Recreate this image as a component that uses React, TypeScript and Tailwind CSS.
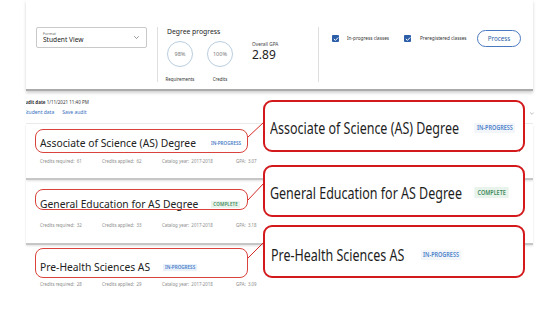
import React from "react";

function Chevron({ className }: { className?: string }) {
  return (
    <svg viewBox="0 0 10 6" className={className} fill="none">
      <path d="M1 1l4 4 4-4" stroke="currentColor" strokeWidth="1.2" strokeLinecap="round" strokeLinejoin="round" />
    </svg>
  );
}

function Check() {
  return (
    <span className="w-[7px] h-[7px] rounded-[1px] bg-[#2c5fa8] flex items-center justify-center">
      <svg viewBox="0 0 8 8" className="w-[6px] h-[6px]" fill="none">
        <path d="M1.5 4.2l1.7 1.7L6.6 2.3" stroke="white" strokeWidth="1.3" strokeLinecap="round" strokeLinejoin="round" />
      </svg>
    </span>
  );
}

function SmallBadge({ kind }: { kind: "ip" | "c" | "ip2" }) {
  if (kind === "c")
    return (
      <span className="ml-[13px] px-[2px] leading-[7px] text-[4.6px] font-semibold tracking-[0.1px] text-[#3f8a5c] bg-[#e9f4ec]">
        COMPLETE
      </span>
    );
  return (
    <span
      className={
        kind === "ip2"
          ? "ml-[13px] px-[2px] leading-[7px] text-[4.6px] font-semibold text-[#4a7ec8] bg-[#e9f1fb]"
          : "ml-[14px] px-[1px] leading-[7px] text-[4.6px] font-semibold text-[#4a7ec8]"
      }
    >
      IN-PROGRESS
    </span>
  );
}

function Meta({ req, app, gpa }: { req: string; app: string; gpa: string }) {
  return (
    <div className="flex leading-[6px] text-[4.4px] text-[#8d8d8d] whitespace-nowrap">
      <span className="w-[62px]">Credits required:&nbsp; {req}</span>
      <span className="w-[60px]">Credits applied:&nbsp; {app}</span>
      <span className="w-[74px]">Catalog year:&nbsp; 2017-2018</span>
      <span>GPA:&nbsp; {gpa}</span>
    </div>
  );
}

export default function App() {
  return (
    <div className="relative w-[554px] h-[312px] bg-white overflow-hidden font-['Noto_Sans',sans-serif] text-[#222]">
      <div className="ml-[26px] w-[507px]">
        {/* top panel */}
        <div className="h-[91px] border-b-2 border-[#ababab] shadow-[0_2px_3px_rgba(0,0,0,0.18)] flex items-start pt-[27px] pl-[10px]">
          <div className="w-[111px] h-[21px] border border-[#c9c9c9] rounded-[2px] flex items-center justify-between pl-[6px] pr-[7px]">
            <div className="flex flex-col">
              <span className="text-[3.8px] leading-[5px] text-[#666]">Format</span>
              <span className="text-[6.6px] leading-[8px] text-[#222]">Student View</span>
            </div>
            <Chevron className="w-[5px] h-[3px] text-[#555]" />
          </div>
          <div className="ml-[10px] w-px h-[55px] bg-[#dedede]" />
          <div className="ml-[9px] flex flex-col">
            <span className="text-[6.8px] leading-[10px] text-[#222]">Degree progress</span>
            <div className="mt-[4px] flex gap-[14px]">
              <div className="flex flex-col items-center w-[26px]">
                <div className="w-[26px] h-[26px] rounded-full border border-[#b9cde0] flex items-center justify-center text-[5.6px] text-[#7a7a7a]">
                  98%
                </div>
                <span className="mt-[9px] text-[4.4px] leading-[6px] whitespace-nowrap text-[#333]">Requirements</span>
              </div>
              <div className="flex flex-col items-center w-[26px]">
                <div className="w-[26px] h-[26px] rounded-full border border-[#b9cde0] flex items-center justify-center text-[5.6px] text-[#7a7a7a]">
                  100%
                </div>
                <span className="mt-[9px] text-[4.4px] leading-[6px] text-[#333]">Credits</span>
              </div>
            </div>
          </div>
          <div className="ml-[19px] w-[66px] mt-[14px] flex flex-col">
            <span className="text-[4.8px] leading-[6px] text-[#444]">Overall GPA</span>
            <span className="text-[12px] leading-[15px] text-[#222]">2.89</span>
          </div>
          <div className="w-px h-[55px] bg-[#dedede]" />
          <div className="ml-[13px] mt-[3px] h-[17px] flex items-center">
            <Check />
            <span className="ml-[8px] w-[50px] text-[4.7px] whitespace-nowrap text-[#333]">In-progress classes</span>
            <span className="ml-[7px]">
              <Check />
            </span>
            <span className="ml-[9px] w-[54px] text-[4.7px] whitespace-nowrap text-[#333]">Preregistered classes</span>
            <span className="ml-[3px] w-[44px] h-[17px] rounded-full border border-[#4b79c0] flex items-center justify-center text-[6.3px] text-[#2d5ea8]">
              Process
            </span>
          </div>
        </div>

        {/* audit info */}
        <div className="h-[33px] border-b border-[#ececec] flex justify-between">
          <div className="overflow-hidden pt-[8px]">
            <div className="-ml-[4px] leading-[6px] text-[4.5px] text-[#333] whitespace-nowrap">
              <span className="font-bold">Audit date</span> 1/11/2021 11:40 PM
            </div>
            <div className="-ml-[2px] mt-[4px] leading-[6px] text-[5px] text-[#3a6fc0] whitespace-nowrap">
              Student data<span className="ml-[8px]">Save audit</span>
            </div>
          </div>
          <Chevron className="mt-[21px] -mr-[1px] w-[4px] h-[3px] text-[#777]" />
        </div>

        {/* card 1 */}
        <div className="relative h-[56px] border-b-2 border-[#c6c6c6] shadow-[0_1px_2px_rgba(0,0,0,0.12)] pl-[14px] pt-[12px]">
          <div className="flex items-center h-[14px]">
            <span className="text-[10.3px] leading-[14px]">Associate of Science (AS) Degree</span>
            <SmallBadge kind="ip" />
          </div>
          <div className="mt-[8px]">
            <Meta req="61" app="62" gpa="3.07" />
          </div>
          <Chevron className="absolute left-[491px] top-[25px] w-[5px] h-[3px] text-[#555]" />
        </div>

        {/* card 2 */}
        <div className="h-[65px] border-b-2 border-[#c6c6c6] shadow-[0_1px_2px_rgba(0,0,0,0.12)] pl-[14px] pt-[17px]">
          <div className="flex items-center h-[14px]">
            <span className="text-[10.3px] leading-[14px]">General Education for AS Degree</span>
            <SmallBadge kind="c" />
          </div>
          <div className="mt-[11px]">
            <Meta req="32" app="33" gpa="3.18" />
          </div>
        </div>

        {/* card 3 */}
        <div className="pl-[14px] pt-[15px]">
          <div className="flex items-center h-[14px]">
            <span className="text-[10.3px] leading-[14px]">Pre-Health Sciences AS</span>
            <SmallBadge kind="ip2" />
          </div>
          <div className="mt-[7px]">
            <Meta req="28" app="29" gpa="3.09" />
          </div>
        </div>
      </div>

      {/* annotation: small highlight boxes */}
      <div className="absolute left-[35px] top-[129px] w-[213px] h-[24px] border border-[#d9433c] rounded-[8px]" />
      <div className="absolute left-[35px] top-[189px] w-[213px] h-[21px] border border-[#d9433c] rounded-[8px]" />
      <div className="absolute left-[35px] top-[248px] w-[213px] h-[30px] border border-[#d9433c] rounded-[8px]" />

      {/* connectors */}
      <svg className="absolute left-0 top-0 w-[554px] h-[312px]" viewBox="0 0 554 312" fill="none">
        <line x1="248" y1="137" x2="264" y2="122" stroke="#d42a24" strokeWidth="1" />
        <line x1="248" y1="200" x2="264" y2="183" stroke="#d42a24" strokeWidth="1" />
        <line x1="248" y1="258" x2="264" y2="242" stroke="#d42a24" strokeWidth="1" />
      </svg>

      {/* annotation: magnified callouts */}
      <div className="absolute left-[263px] top-[100px] w-[262px] h-[52px] border-[2.5px] border-[#d3191c] rounded-[9px] bg-white pl-[5px] pt-[4px] flex items-center">
        <div className="flex items-center origin-left scale-x-[0.78] whitespace-nowrap">
          <span className="text-[16px] leading-[20px] text-[#1d1d1d]">Associate of Science (AS) Degree</span>
          <span className="ml-[20px] px-[3px] leading-[10px] text-[7px] font-semibold text-[#4a7ec8] bg-[#f2f6fb]">IN-PROGRESS</span>
        </div>
      </div>
      <div className="absolute left-[263px] top-[165px] w-[262px] h-[52px] border-[2.5px] border-[#d3191c] rounded-[9px] bg-white pl-[5px] pt-[3px] flex items-center">
        <div className="flex items-center origin-left scale-x-[0.78] whitespace-nowrap">
          <span className="text-[16px] leading-[20px] text-[#1d1d1d]">General Education for AS Degree</span>
          <span className="ml-[16px] px-[4px] leading-[11px] text-[7px] font-semibold text-[#3f8a5c] bg-[#e8f3eb]">COMPLETE</span>
        </div>
      </div>
      <div className="absolute left-[263px] top-[225px] w-[262px] h-[53px] border-[2.5px] border-[#d3191c] rounded-[9px] bg-white pl-[6px] pt-[6px] flex items-center">
        <div className="flex items-center origin-left scale-x-[0.78] whitespace-nowrap">
          <span className="text-[16px] leading-[20px] text-[#1d1d1d]">Pre-Health Sciences AS</span>
          <span className="ml-[21px] px-[3px] leading-[10px] text-[7px] font-semibold text-[#4a7ec8] bg-[#f2f6fb]">IN-PROGRESS</span>
        </div>
      </div>
    </div>
  );
}
